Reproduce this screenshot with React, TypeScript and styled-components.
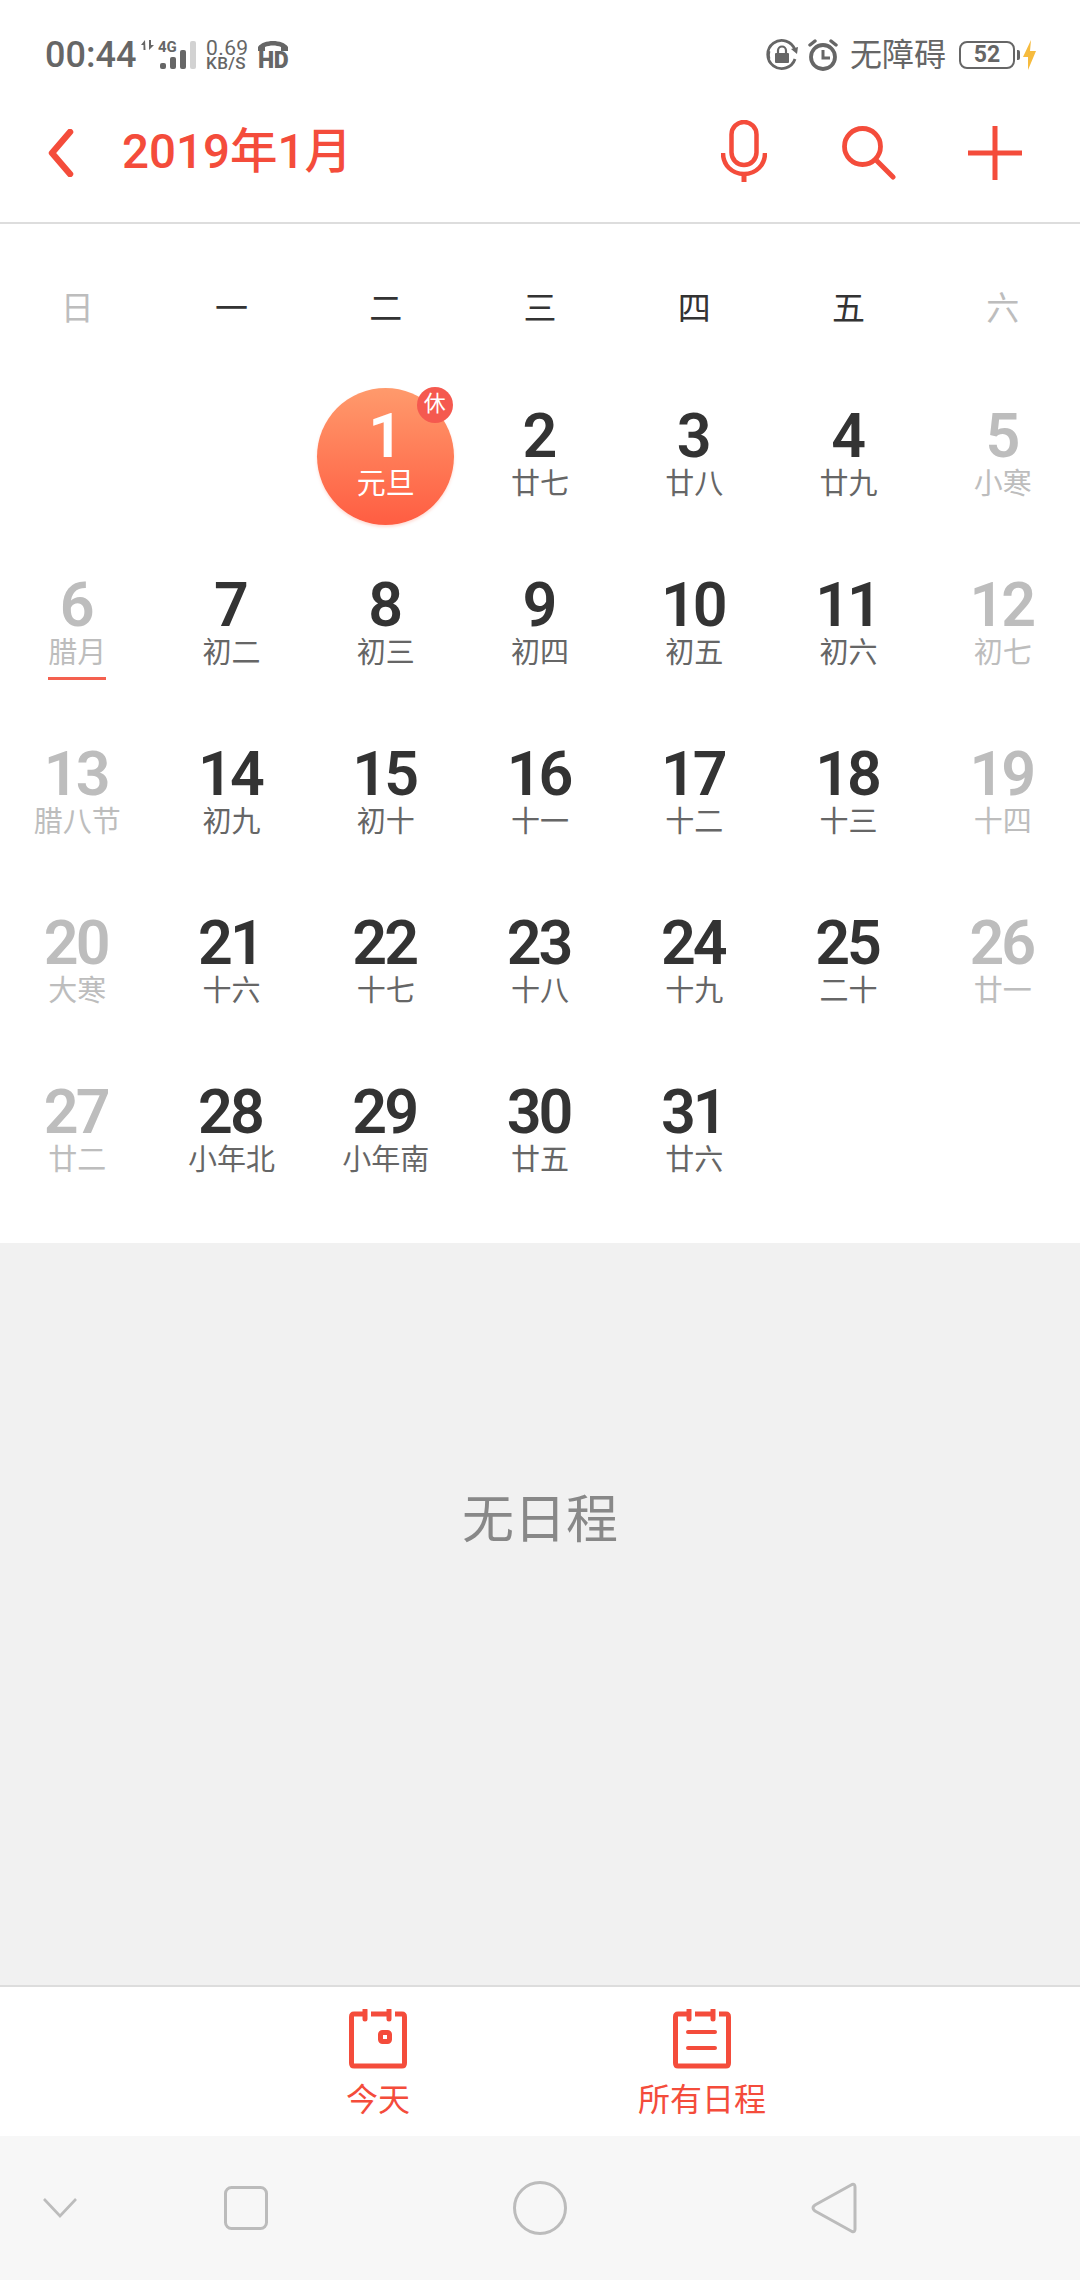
import React from "react";
import styled, { createGlobalStyle } from "styled-components";

const RED = "#f44c3b";
const GREY = "#666666";
const CJK = `Roboto, "Noto Sans CJK SC", sans-serif`;

const Global = createGlobalStyle`
  html, body { margin: 0; padding: 0; background: #fff; }
  * { box-sizing: border-box; }
  body { font-family: ${CJK}; }
`;

const Page = styled.div`
  width: 1080px;
  height: 2280px;
  display: flex;
  flex-direction: column;
  overflow: hidden;
  background: #fff;
`;

const StatusBar = styled.div`
  height: 90px;
  padding: 20px 44px 0 45px;
  display: flex;
  align-items: center;
  color: ${GREY};
`;
const Time = styled.span`
  font-size: 36px;
  font-weight: 500;
  line-height: 1;
  width: 95px;
`;
const Speed = styled.div`
  display: flex;
  flex-direction: column;
  margin-left: 10px;
  font-size: 17px;
  line-height: 15px;
  font-weight: 500;
  width: 50px;
  letter-spacing: 0.4px;
`;
const SpeedValue = styled.span`
  font-size: 21px;
  line-height: 16px;
  font-weight: 400;
`;
const Spacer = styled.div`
  flex: 1;
`;
const Signal = styled.div`
  position: relative;
  width: 56px;
  height: 36px;
`;
const SignalLabel = styled.span`
  position: absolute;
  left: 18px;
  top: 3px;
  font-size: 15px;
  font-weight: 700;
  line-height: 14px;
`;
const Hd = styled.div`
  width: 34px;
  display: flex;
  flex-direction: column;
  align-items: center;
`;
const HdText = styled.span`
  font-size: 23px;
  font-weight: 900;
  line-height: 19px;
  letter-spacing: -0.6px;
`;
const Access = styled.span`
  font-size: 32px;
  line-height: 1;
  margin: 0 13px 0 12px;
  font-weight: 400;
`;
const Battery = styled.div`
  width: 56px;
  height: 28px;
  border: 2px solid ${GREY};
  border-radius: 8px;
  font-size: 23px;
  font-weight: 700;
  line-height: 24px;
  text-align: center;
`;
const BatteryTip = styled.div`
  width: 3px;
  height: 10px;
  background: ${GREY};
  margin: 0 3px 0 2px;
  border-radius: 0 2px 2px 0;
`;
const StatusGroup = styled.div`
  display: flex;
  align-items: center;
  gap: 10px;
`;

const TitleBar = styled.div`
  height: 134px;
  padding: 0 58px 6px 48px;
  display: flex;
  align-items: center;
  border-bottom: 2px solid #dddddd;
`;
const Title = styled.h1`
  margin: 0 0 0 48px;
  font-size: 47.5px;
  font-weight: 500;
  line-height: 1;
  color: ${RED};
  flex: 1;
`;
const Actions = styled.div`
  display: flex;
  align-items: center;
  gap: 72px;
  & > :first-child {
    margin: 0 3px 4px 0;
  }
`;

const Calendar = styled.section`
  padding-bottom: 25px;
`;
const WeekRow = styled.div`
  height: 149px;
  display: grid;
  grid-template-columns: repeat(7, 1fr);
  padding-top: 67px;
`;
const WeekDay = styled.div<{ $dim?: boolean }>`
  text-align: center;
  font-size: 33px;
  line-height: 36px;
  color: ${(p) => (p.$dim ? "#bdbdbd" : "#333333")};
`;
const Days = styled.div`
  display: grid;
  grid-template-columns: repeat(7, 1fr);
  grid-auto-rows: 169px;
`;
const Cell = styled.div`
  position: relative;
  display: flex;
  flex-direction: column;
  align-items: center;
  justify-content: center;
  padding-bottom: 3px;
`;
const Num = styled.div<{ $dim?: boolean; $on?: boolean }>`
  position: relative;
  font-size: 61px;
  font-weight: 600;
  line-height: 56px;
  letter-spacing: -3px;
  padding-right: 3px;
  color: ${(p) => (p.$on ? "#fff" : p.$dim ? "#bdbdbd" : "#333333")};
`;
const Sub = styled.div<{ $dim?: boolean; $on?: boolean }>`
  position: relative;
  font-size: 29px;
  line-height: 40px;
  color: ${(p) => (p.$on ? "#fff" : p.$dim ? "#bdbdbd" : GREY)};
`;
const TodayDisc = styled.div`
  position: absolute;
  left: 50%;
  top: 15px;
  width: 137px;
  height: 137px;
  margin-left: -69px;
  border-radius: 50%;
  background: linear-gradient(180deg, #ff9a6c 0%, #ff5d42 100%);
  box-shadow: 0 2px 3px rgba(255, 120, 90, 0.25);
`;
const RestBadge = styled.div`
  position: absolute;
  left: 50%;
  top: 14px;
  margin-left: 31px;
  width: 36px;
  height: 36px;
  border-radius: 50%;
  background: #f5594f;
  color: #fff;
  font-size: 22px;
  line-height: 34px;
  text-align: center;
`;
const TermMark = styled.div`
  position: absolute;
  left: 48px;
  top: 135px;
  width: 58px;
  height: 3px;
  background: #f4604f;
`;

const Empty = styled.div`
  flex: 1;
  background: #f1f1f1;
  display: flex;
  align-items: center;
  justify-content: center;
  font-size: 52px;
  color: #888888;
  padding-bottom: 198px;
`;

const TabBar = styled.nav`
  height: 151px;
  border-top: 2px solid #dddddd;
  display: flex;
  justify-content: center;
  background: #fff;
`;
const Tab = styled.div`
  width: 324px;
  padding-top: 22px;
  display: flex;
  flex-direction: column;
  align-items: center;
  color: ${RED};
  font-size: 32px;
  line-height: 40px;
  gap: 11px;
`;

const NavBar = styled.div`
  height: 144px;
  background: #f7f7f7;
  display: grid;
  grid-template-columns: 120px 252px 336px 252px;
  align-items: center;
  justify-items: center;
`;

const Back = () => (
  <svg width="26" height="48" viewBox="0 0 26 48">
    <path d="M22 3 L4 24 L22 45" fill="none" stroke={RED} strokeWidth="6.5" strokeLinecap="round" strokeLinejoin="round" />
  </svg>
);
const Mic = () => (
  <svg width="46" height="62" viewBox="0 0 46 62">
    <rect x="10.5" y="2" width="25" height="43" rx="12.5" fill="none" stroke={RED} strokeWidth="4.5" />
    <path d="M2 33 C2 45 11 54 23 54 C35 54 44 45 44 33" fill="none" stroke={RED} strokeWidth="4.5" />
    <path d="M23 54 V62" stroke={RED} strokeWidth="5" />
  </svg>
);
const Search = () => (
  <svg width="54" height="54" viewBox="0 0 54 54">
    <circle cx="20.5" cy="20.5" r="18" fill="none" stroke={RED} strokeWidth="4.8" />
    <path d="M34 34 L51 51" stroke={RED} strokeWidth="5" strokeLinecap="round" />
  </svg>
);
const Plus = () => (
  <svg width="54" height="54" viewBox="0 0 54 54">
    <path d="M27 0 V54 M0 27 H54" stroke={RED} strokeWidth="5" />
  </svg>
);
const CalendarIcon = ({ children }: { children: React.ReactNode }) => (
  <svg width="58" height="60" viewBox="0 0 58 60">
    <path
      d="M16 5 H5 Q2.5 5 2.5 8 V54 Q2.5 57 5 57 H53 Q55.5 57 55.5 54 V8 Q55.5 5 53 5 H46 M22 5 H40"
      fill="none"
      stroke={RED}
      strokeWidth="5"
    />
    <path d="M16 1 V10 M40 1 V10" stroke={RED} strokeWidth="5" strokeLinecap="round" />
    {children}
  </svg>
);
const SignalIcon = () => (
  <svg width="56" height="36" viewBox="0 0 56 36">
    <path d="M5 3 L1 8 H3.5 V13 H5.5 Z M9 13 L14 8 H11 V3 H9 Z" fill={GREY} />
    <rect x="20" y="26" width="6" height="6" rx="2" fill={GREY} />
    <rect x="30" y="20" width="6" height="12" rx="2" fill={GREY} />
    <rect x="40" y="13" width="6" height="19" rx="2" fill={GREY} />
    <rect x="50" y="4" width="6" height="28" rx="2" fill="#d2d2d2" />
  </svg>
);
const LockIcon = () => (
  <svg width="32" height="32" viewBox="0 0 32 32">
    <path d="M29 20 A14 14 0 1 1 29 11" fill="none" stroke={GREY} strokeWidth="2.8" />
    <path d="M3 12 A14 14 0 0 0 3 20" fill="none" stroke={GREY} strokeWidth="2.8" />
    <path d="M25 10 L31 15 L32 8 Z" fill={GREY} />
    <rect x="9" y="14" width="14" height="10" rx="1" fill={GREY} />
    <path d="M12 14 V11.5 A4 4 0 0 1 20 11.5 V14" fill="none" stroke={GREY} strokeWidth="2.2" />
  </svg>
);
const AlarmIcon = () => (
  <svg width="30" height="32" viewBox="0 0 30 32">
    <circle cx="15" cy="18" r="12" fill="none" stroke={GREY} strokeWidth="3.8" />
    <path d="M15 11 V19 H22" fill="none" stroke={GREY} strokeWidth="3" />
    <path d="M2 6 L7 2 M28 6 L23 2" stroke={GREY} strokeWidth="3.4" strokeLinecap="round" />
  </svg>
);
const Bolt = () => (
  <svg width="13" height="30" viewBox="0 0 13 30">
    <path d="M8 0 L0 17 H5 L5 30 L13 11 H7 Z" fill="#f6bb3e" />
  </svg>
);
const HdPhone = () => (
  <svg width="30" height="11" viewBox="0 0 30 11">
    <path d="M0 11 V7 C5 -1 25 -1 30 7 V11 H23 V7 C18 5 12 5 7 7 V11 Z" fill={GREY} />
  </svg>
);
const NavBack = () => (
  <svg width="46" height="52" viewBox="0 0 46 52">
    <path
      d="M41 2.5 Q44 1.5 44 5 V47 Q44 50.5 41 49.5 L4 29 Q0 26 4 23 Z"
      fill="none"
      stroke="#bcbcbc"
      strokeWidth="3"
      strokeLinejoin="round"
    />
  </svg>
);
const NavHome = () => (
  <svg width="54" height="54" viewBox="0 0 54 54">
    <circle cx="27" cy="27" r="25.5" fill="none" stroke="#bcbcbc" strokeWidth="3" />
  </svg>
);
const NavSquare = () => (
  <svg width="44" height="44" viewBox="0 0 44 44">
    <rect x="1.5" y="1.5" width="41" height="41" rx="6" fill="none" stroke="#bcbcbc" strokeWidth="3" />
  </svg>
);
const NavDown = () => (
  <svg width="34" height="20" viewBox="0 0 34 20">
    <path d="M1 1 L17 18 L33 1" fill="none" stroke="#bcbcbc" strokeWidth="2.6" />
  </svg>
);

type Day = { n: number; s: string };
const days: Day[] = [
  { n: 1, s: "元旦" }, { n: 2, s: "廿七" }, { n: 3, s: "廿八" }, { n: 4, s: "廿九" }, { n: 5, s: "小寒" },
  { n: 6, s: "腊月" }, { n: 7, s: "初二" }, { n: 8, s: "初三" }, { n: 9, s: "初四" }, { n: 10, s: "初五" }, { n: 11, s: "初六" }, { n: 12, s: "初七" },
  { n: 13, s: "腊八节" }, { n: 14, s: "初九" }, { n: 15, s: "初十" }, { n: 16, s: "十一" }, { n: 17, s: "十二" }, { n: 18, s: "十三" }, { n: 19, s: "十四" },
  { n: 20, s: "大寒" }, { n: 21, s: "十六" }, { n: 22, s: "十七" }, { n: 23, s: "十八" }, { n: 24, s: "十九" }, { n: 25, s: "二十" }, { n: 26, s: "廿一" },
  { n: 27, s: "廿二" }, { n: 28, s: "小年北" }, { n: 29, s: "小年南" }, { n: 30, s: "廿五" }, { n: 31, s: "廿六" },
];
const week = ["日", "一", "二", "三", "四", "五", "六"];

export default function App() {
  return (
    <Page>
      <Global />
      <StatusBar>
        <Time>00:44</Time>
        <Signal>
          <SignalIcon />
          <SignalLabel>4G</SignalLabel>
        </Signal>
        <Speed>
          <SpeedValue>0.69</SpeedValue>
          <span>KB/S</span>
        </Speed>
        <Hd>
          <HdPhone />
          <HdText>HD</HdText>
        </Hd>
        <Spacer />
        <StatusGroup>
          <LockIcon />
          <AlarmIcon />
        </StatusGroup>
        <Access>无障碍</Access>
        <Battery>52</Battery>
        <BatteryTip />
        <Bolt />
      </StatusBar>
      <TitleBar>
        <Back />
        <Title>2019年1月</Title>
        <Actions>
          <Mic />
          <Search />
          <Plus />
        </Actions>
      </TitleBar>
      <Calendar>
        <WeekRow>
          {week.map((w, i) => (
            <WeekDay key={w} $dim={i === 0 || i === 6}>
              {w}
            </WeekDay>
          ))}
        </WeekRow>
        <Days>
          <div />
          <div />
          {days.map((d, i) => {
            const col = (i + 2) % 7;
            const dim = col === 0 || col === 6;
            const on = d.n === 1;
            return (
              <Cell key={d.n}>
                {on && <TodayDisc />}
                {on && <RestBadge>休</RestBadge>}
                <Num $dim={dim} $on={on}>{d.n}</Num>
                <Sub $dim={dim} $on={on}>{d.s}</Sub>
                {d.n === 6 && <TermMark />}
              </Cell>
            );
          })}
        </Days>
      </Calendar>
      <Empty>无日程</Empty>
      <TabBar>
        <Tab>
          <CalendarIcon>
            <rect x="31.5" y="23.5" width="9" height="9" rx="2" fill="none" stroke={RED} strokeWidth="5" />
          </CalendarIcon>
          今天
        </Tab>
        <Tab>
          <CalendarIcon>
            <path d="M15 23 H42 M15 39 H42" stroke={RED} strokeWidth="4" strokeLinecap="round" />
          </CalendarIcon>
          所有日程
        </Tab>
      </TabBar>
      <NavBar>
        <NavDown />
        <NavSquare />
        <NavHome />
        <NavBack />
      </NavBar>
    </Page>
  );
}
